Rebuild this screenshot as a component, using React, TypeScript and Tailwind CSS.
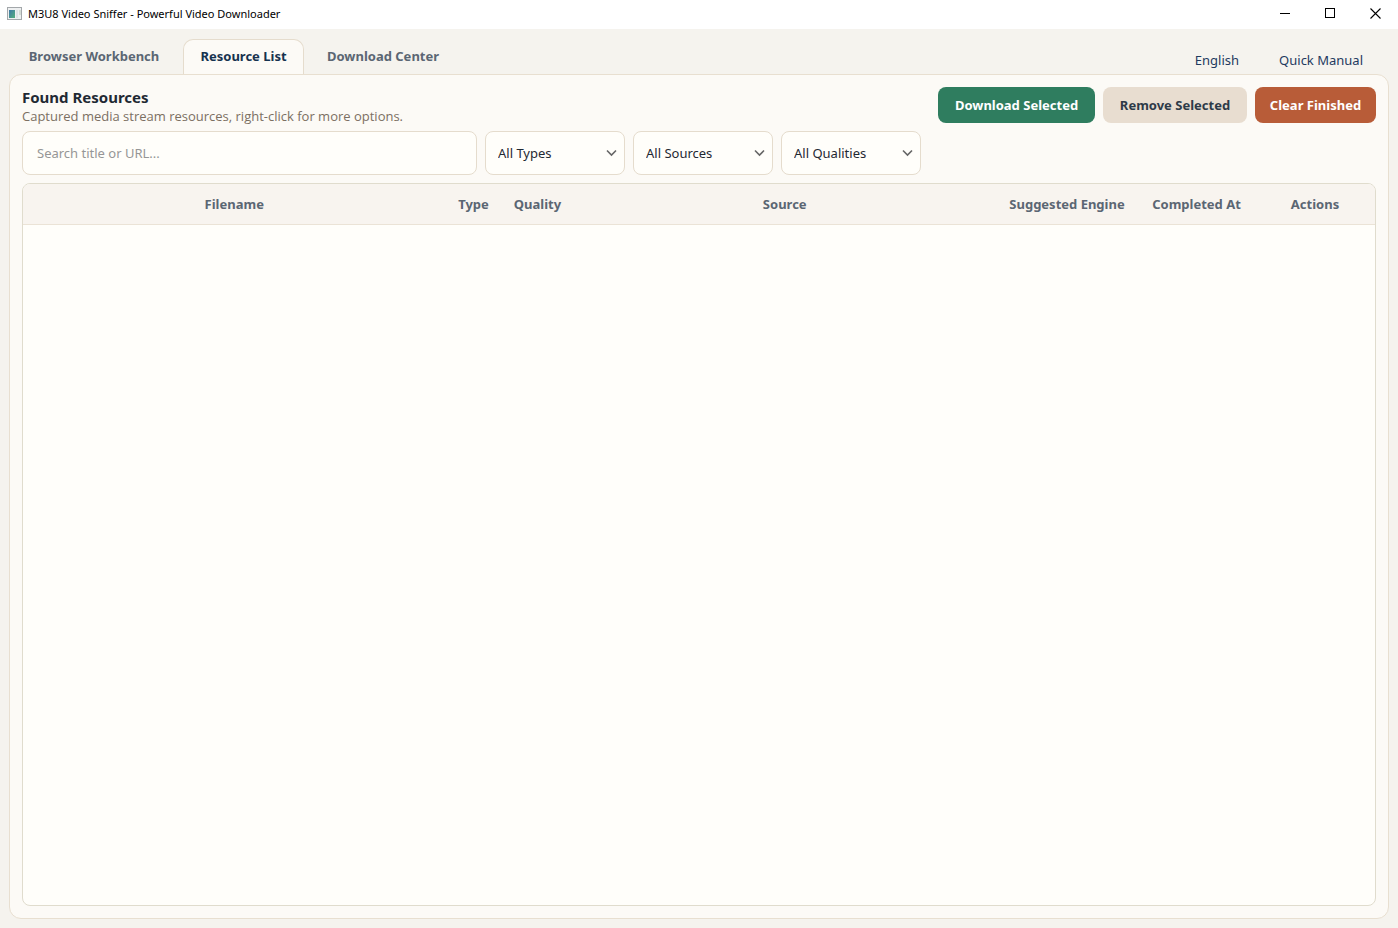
import { useState } from 'react';

interface FilterSelectProps {
  label: string;
  options: string[];
}

const tabs = [
  { title: 'Browser Workbench', width: 'w-[170px]' },
  { title: 'Resource List', width: 'w-[121px]' },
  { title: 'Download Center', width: 'w-[150px]' },
];

const columns = [
  { title: 'Filename', width: '' },
  { title: 'Type', width: 'w-[56px]' },
  { title: 'Quality', width: 'w-[72px]' },
  { title: 'Source', width: '' },
  { title: 'Suggested Engine', width: 'w-[142px]' },
  { title: 'Completed At', width: 'w-[117px]' },
  { title: 'Actions', width: 'w-[120px]' },
];

function AppIcon() {
  return (
    <svg width="15" height="13" viewBox="0 0 15 13" shapeRendering="crispEdges" aria-hidden="true">
      <defs>
        <linearGradient id="pane" x1="0" y1="0" x2="1" y2="1">
          <stop offset="0" stopColor="#3f78a8" />
          <stop offset="1" stopColor="#55b07c" />
        </linearGradient>
      </defs>
      <rect x="0" y="0" width="15" height="13" fill="#a3a7aa" />
      <rect x="1" y="1" width="13" height="11" fill="#eef0f1" />
      <rect x="2" y="3" width="6" height="8" fill="url(#pane)" />
      <rect x="9" y="3" width="2" height="8" fill="#dfe2e6" />
      <rect x="12" y="3" width="2" height="5" fill="#d3dbd5" />
    </svg>
  );
}

function TitleBar() {
  return (
    <header className="flex h-[29px] items-center justify-between bg-white pl-[7px] text-black">
      <div className="flex h-full items-center gap-[6px] pb-[3px]">
        <AppIcon />
        <h1 className="pt-[2px] text-[11px] leading-4">M3U8 Video Sniffer - Powerful Video Downloader</h1>
      </div>
      <div className="flex h-full items-center pb-[3px]">
        <button aria-label="Minimize" className="flex w-[45px] justify-center">
          <svg width="11" height="11" viewBox="0 0 11 11" shapeRendering="crispEdges">
            <path d="M0 5.5h10" stroke="currentColor" fill="none" />
          </svg>
        </button>
        <button aria-label="Maximize" className="flex w-[45px] justify-center">
          <svg width="11" height="11" viewBox="0 0 11 11" shapeRendering="crispEdges">
            <rect x="0.5" y="0.5" width="9" height="9" stroke="currentColor" fill="none" />
          </svg>
        </button>
        <button aria-label="Close" className="flex w-[45px] justify-center">
          <svg width="11" height="11" viewBox="0 0 11 11">
            <path d="M0.5 0.5l10 10M10.5 0.5l-10 10" stroke="currentColor" strokeWidth="1.1" fill="none" />
          </svg>
        </button>
      </div>
    </header>
  );
}

function FilterSelect({ label, options }: FilterSelectProps) {
  return (
    <div className="relative w-[140px]">
      <select
        aria-label={label}
        className="h-11 w-full appearance-none rounded-lg border border-[#e5dccd] bg-[#fffefa] pl-3 pr-8 pt-px text-[13px] text-[#1f2933]"
      >
        {options.map((option) => (
          <option key={option}>{option}</option>
        ))}
      </select>
      <svg
        className="pointer-events-none absolute right-2 top-[18px] text-[#666666]"
        width="11"
        height="8"
        viewBox="0 0 11 8"
        fill="none"
        stroke="currentColor"
        strokeWidth="1.6"
      >
        <path d="M1 1.5l4.5 4.5L10 1.5" />
      </svg>
    </div>
  );
}

export default function App() {
  const [activeTab, setActiveTab] = useState('Resource List');
  const [search, setSearch] = useState('');

  return (
    <div className="flex min-h-screen flex-col bg-[#f5f3ee] font-['Noto_Sans','Open_Sans',sans-serif] text-[13px]">
      <TitleBar />
      <div className="flex flex-1 flex-col px-[9px] pb-[9px] pt-[10px]">
        <div className="flex justify-between">
          <nav className="flex gap-1" role="tablist">
            {tabs.map((tab) => (
              <button
                key={tab.title}
                role="tab"
                aria-selected={tab.title === activeTab}
                onClick={() => setActiveTab(tab.title)}
                className={`h-[35px] rounded-t-[10px] border border-b-0 font-bold ${tab.width} ${
                  tab.title === activeTab
                    ? 'border-[#e5dccd] bg-[#fcfaf6] text-[#16324f]'
                    : 'border-transparent text-[#5b6673]'
                }`}
              >
                {tab.title}
              </button>
            ))}
          </nav>
          <div className="flex items-end gap-10 pb-1 pr-[26px] text-[#1f3a5f]">
            <button>English</button>
            <button>Quick Manual</button>
          </div>
        </div>

        <main className="flex flex-1 flex-col gap-2 rounded-xl border border-[#e8dfd0] bg-[#fcfaf6] p-3">
          <div className="flex h-9 items-start justify-between">
            <div>
              <h2 className="text-[15px] font-bold leading-5 text-[#1f2933]">Found Resources</h2>
              <p className="font-['Open_Sans','Noto_Sans',sans-serif] text-[13px] leading-[18px] text-[#7b6f62]">
                Captured media stream resources, right-click for more options.
              </p>
            </div>
            <div className="flex gap-2 font-bold">
              <button className="h-9 w-[157px] rounded-lg bg-[#2f7d5f] pt-px text-white">Download Selected</button>
              <button className="h-9 w-[144px] rounded-lg bg-[#e8ddd0] pt-px text-[#2d3a48]">Remove Selected</button>
              <button className="h-9 w-[121px] rounded-lg bg-[#b85c38] pt-px text-white">Clear Finished</button>
            </div>
          </div>

          <div className="flex gap-2">
            <input
              type="text"
              aria-label="Search resources"
              value={search}
              onChange={(e) => setSearch(e.target.value)}
              placeholder="Search title or URL..."
              className="h-11 w-[455px] rounded-lg border border-[#e5dccd] bg-[#fffefa] px-[14px] text-[13px] text-[#1f2933] placeholder:text-[#969696]"
            />
            <FilterSelect label="Type" options={['All Types']} />
            <FilterSelect label="Source" options={['All Sources']} />
            <FilterSelect label="Quality" options={['All Qualities']} />
          </div>

          <div className="flex-1 overflow-hidden rounded-lg border border-[#e0dccd] bg-[#fffefa]">
            <table className="w-full table-fixed border-collapse">
              <thead>
                <tr className="h-10 border-b border-[#ebe3d6] bg-[#f8f4ef] text-[#5b6673]">
                  {columns.map((column) => (
                    <th
                      key={column.title}
                      scope="col"
                      className={`whitespace-nowrap p-0 pt-[2px] text-center font-bold ${column.width}`}
                    >
                      {column.title}
                    </th>
                  ))}
                </tr>
              </thead>
              <tbody />
            </table>
          </div>
        </main>
      </div>
    </div>
  );
}
